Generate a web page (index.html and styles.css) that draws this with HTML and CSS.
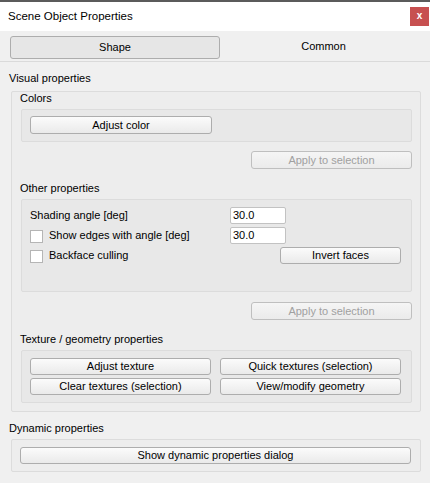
FILE: index.html
```
<!DOCTYPE html>
<html>
<head>
<meta charset="utf-8">
<link rel="stylesheet" href="styles.css">
</head>
<body>
<div class="window">
  <div class="titlebar">
    <span class="title">Scene Object Properties</span>
    <span class="close">x</span>
  </div>
  <div class="tabs">
    <div class="tab active">Shape</div>
    <div class="tab">Common</div>
  </div>
  <div class="content">
    <div class="label top-label">Visual properties</div>
    <div class="group visual">
      <div class="label colors-label">Colors</div>
      <div class="group inner colors">
        <button class="btn w182">Adjust color</button>
      </div>
      <div class="apply-row apply1"><button class="btn disabled apply">Apply to selection</button></div>
      <div class="label sub-label">Other properties</div>
      <div class="group inner other">
        <div class="row">
          <span class="rlabel">Shading angle [deg]</span>
          <span class="input">30.0</span>
        </div>
        <div class="row">
          <span class="rlabel"><span class="check"></span>Show edges with angle [deg]</span>
          <span class="input">30.0</span>
        </div>
        <div class="row">
          <span class="rlabel"><span class="check"></span>Backface culling</span>
          <button class="btn invert">Invert faces</button>
        </div>
      </div>
      <div class="apply-row apply2"><button class="btn disabled apply">Apply to selection</button></div>
      <div class="label sub-label">Texture / geometry properties</div>
      <div class="group inner texture">
        <button class="btn">Adjust texture</button>
        <button class="btn">Quick textures (selection)</button>
        <button class="btn">Clear textures (selection)</button>
        <button class="btn">View/modify geometry</button>
      </div>
    </div>
    <div class="label dyn-label">Dynamic properties</div>
    <div class="group dynamic">
      <button class="btn full">Show dynamic properties dialog</button>
    </div>
  </div>
</div>
</body>
</html>
```
FILE: styles.css
```
html, body {
  margin: 0;
  padding: 0;
  background: #f0f0f0;
}
* {
  box-sizing: border-box;
}
.window {
  width: 430px;
  height: 483px;
  background: #f0f0f0;
  border-top: 2px solid #5b5b5b;
  font-family: "Liberation Sans", Arial, sans-serif;
  font-size: 11px;
  color: #000;
  overflow: hidden;
}
.titlebar {
  height: 29px;
  background: #fff;
  display: flex;
  align-items: center;
  justify-content: space-between;
  padding-left: 8px;
  padding-right: 1px;
}
.title {
  font-size: 11.5px;
  line-height: 13px;
}
.close {
  width: 19px;
  height: 19px;
  background: #c75050;
  color: #fff;
  font-weight: bold;
  font-size: 10px;
  line-height: 18px;
  text-align: center;
}
.tabs {
  height: 31px;
  border-bottom: 1px solid #dadada;
  display: flex;
  align-items: flex-start;
  padding: 5px 3px 0 10px;
}
.tab {
  height: 23px;
  line-height: 21px;
  text-align: center;
  flex: 1;
}
.tab.active {
  flex: 0 0 210px;
  background: #e6e6e6;
  border: 1px solid #adadad;
  border-radius: 3px;
}
.content {
  padding: 0 9px 0 11px;
}
.label {
  height: 13px;
  line-height: 13px;
  white-space: nowrap;
}
.top-label {
  margin: 10px 0 6px -2px;
}
.group {
  border: 1px solid #dcdcdc;
  border-radius: 2px;
  background: rgba(0, 0, 0, 0.012);
}
.visual {
  height: 321px;
  padding: 0 8px 0 9px;
}
.colors-label {
  margin: 0 0 4px -1px;
}
.inner {
  background: rgba(0, 0, 0, 0.018);
}
.colors {
  height: 33px;
  padding: 6px 8px 0 8px;
}
.btn {
  display: block;
  height: 18px;
  margin: 0;
  padding: 0;
  font-family: inherit;
  font-size: 11px;
  line-height: 16px;
  color: #000;
  text-align: center;
  border: 1px solid #adadad;
  border-radius: 3px;
  background: linear-gradient(#fbfbfb, #eaeaea);
  white-space: nowrap;
}
.btn.disabled {
  color: #a0a0a0;
  border-color: #bfbfbf;
  background: linear-gradient(#f5f5f5, #ebebeb);
}
.w182 {
  width: 182px;
}
.apply-row {
  display: flex;
  justify-content: flex-end;
}
.apply1 {
  margin-top: 9px;
}
.apply2 {
  margin-top: 10px;
}
.apply {
  width: 161px;
}
.sub-label {
  margin: 13px 0 4px -1px;
}
.other {
  height: 93px;
  padding: 7px 10px 0 8px;
  display: flex;
  flex-direction: column;
  gap: 3px;
}
.row {
  display: grid;
  grid-template-columns: 200px 1fr;
  align-items: center;
  height: 17px;
}
.rlabel {
  display: flex;
  align-items: center;
  line-height: 13px;
}
.check {
  width: 13px;
  height: 13px;
  background: #fff;
  border: 1px solid #b5b5b5;
  margin-right: 6px;
  margin-top: 1px;
}
.input {
  justify-self: start;
  width: 56px;
  height: 17px;
  background: #fff;
  border: 1px solid #c2c2c2;
  border-radius: 2px;
  padding-left: 2px;
  line-height: 15px;
}
.invert {
  justify-self: end;
  width: 121px;
  height: 17px;
  line-height: 15px;
}
.texture {
  height: 53px;
  padding: 7px 10px 0 8px;
  display: grid;
  grid-template-columns: 181px 181px;
  grid-auto-rows: 17px;
  column-gap: 9px;
  row-gap: 3px;
}
.texture .btn {
  height: 17px;
  line-height: 15px;
  width: 100%;
}
.dyn-label {
  margin: 10px 0 4px -2px;
}
.dynamic {
  height: 33px;
  padding: 7px 9px 0 8px;
}
.full {
  width: 100%;
  height: 17px;
  line-height: 15px;
}
```
